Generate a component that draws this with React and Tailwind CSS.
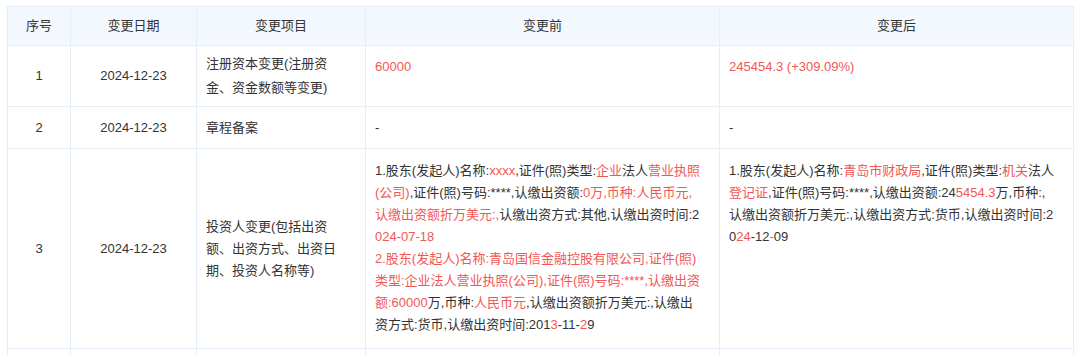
const R = true

// each line is an array of [text, isRed]
const before3 = [
  [['1.股东(发起人)名称:'], ['xxxx', R], [',证件(照)类型:'], ['企业', R], ['法人'], ['营业执照', R]],
  [['(公司)', R], [',证件(照)号码:****,认缴出资额:'], ['0万,币种:人民币元,', R]],
  [['认缴出资额折万美元:,', R], ['认缴出资方式:其他,认缴出资时间:2']],
  [['024-07-18', R]],
  [['2.股东(发起人)名称:青岛国信金融控股有限公司,证件(照)', R]],
  [['类型:企业法人营业执照(公司),证件(照)号码:****,认缴出资', R]],
  [['额:60000', R], ['万,币种:'], ['人民币元', R], [',认缴出资额折万美元:,认缴出']],
  [['资方式:货币,认缴出资时间:201'], ['3', R], ['-11-'], ['2', R], ['9']],
]

const after3 = [
  [['1.股东(发起人)名称:'], ['青岛市财政局', R], [',证件(照)类型:'], ['机关', R], ['法人']],
  [['登记证', R], [',证件(照)号码:****,认缴出资额:24'], ['5454.3', R], ['万,币种:,']],
  [['认缴出资额折万美元:,认缴出资方式:货币,认缴出资时间:2']],
  [['0'], ['24', R], ['-12'], ['-', R], ['09']],
]

function Lines({ lines }) {
  return lines.map((line, i) => (
    <div key={i} className="whitespace-nowrap">
      {line.map(([t, red], j) => (
        <span key={j} className={red ? 'text-[#f25656]' : ''}>{t}</span>
      ))}
    </div>
  ))
}

const cell = 'border border-[#e6eefa] px-[9px]'

export default function App() {
  return (
    <div
      className="bg-white pl-[7px] pt-[6px] h-[355px] overflow-hidden text-[13px] leading-[22px] text-[#333333]"
      style={{ fontFamily: '"Liberation Sans", "Noto Sans CJK SC", sans-serif' }}
    >
      <table className="table-fixed border-collapse w-[1067px]">
        <colgroup>
          <col className="w-[63px]" />
          <col className="w-[126px]" />
          <col className="w-[169px]" />
          <col className="w-[354px]" />
          <col className="w-[354px]" />
        </colgroup>
        <thead>
          <tr className="h-[39px] bg-[#f3f8fe]">
            <th className={`${cell} font-normal text-center`}>序号</th>
            <th className={`${cell} font-normal text-center`}>变更日期</th>
            <th className={`${cell} font-normal text-center`}>变更项目</th>
            <th className={`${cell} font-normal text-center`}>变更前</th>
            <th className={`${cell} font-normal text-center`}>变更后</th>
          </tr>
        </thead>
        <tbody>
          <tr className="h-[61px]">
            <td className={`${cell} text-center align-middle`}>1</td>
            <td className={`${cell} text-center align-middle`}>2024-12-23</td>
            <td className={`${cell} align-middle leading-[24px]`}>
              <div>注册资本变更(注册资</div>
              <div>金、资金数额等变更)</div>
            </td>
            <td className={`${cell} align-top pt-[10px] text-[#f25656]`}>60000</td>
            <td className={`${cell} align-top pt-[10px] text-[#f25656]`}>245454.3 (+309.09%)</td>
          </tr>
          <tr className="h-[42px]">
            <td className={`${cell} text-center align-middle`}>2</td>
            <td className={`${cell} text-center align-middle`}>2024-12-23</td>
            <td className={`${cell} align-middle`}>章程备案</td>
            <td className={`${cell} align-middle`}>-</td>
            <td className={`${cell} align-middle`}>-</td>
          </tr>
          <tr className="h-[200px]">
            <td className={`${cell} text-center align-middle`}>3</td>
            <td className={`${cell} text-center align-middle`}>2024-12-23</td>
            <td className={`${cell} align-middle`}>
              <div>投资人变更(包括出资</div>
              <div>额、出资方式、出资日</div>
              <div>期、投资人名称等)</div>
            </td>
            <td className={`${cell} align-top py-[11px]`}>
              <Lines lines={before3} />
            </td>
            <td className={`${cell} align-top py-[11px]`}>
              <Lines lines={after3} />
            </td>
          </tr>
          <tr className="h-[42px]">
            <td className={cell}></td>
            <td className={cell}></td>
            <td className={cell}></td>
            <td className={cell}></td>
            <td className={cell}></td>
          </tr>
        </tbody>
      </table>
    </div>
  )
}
